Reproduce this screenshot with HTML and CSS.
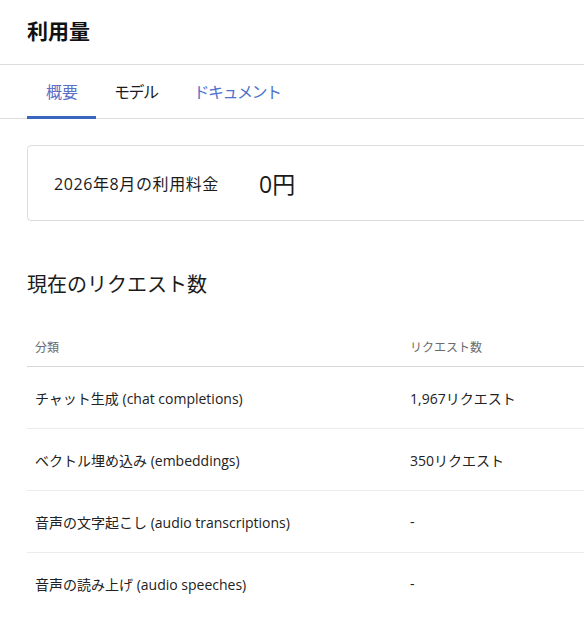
FILE: index.html
```html
<!DOCTYPE html>
<html lang="ja">
<head>
  <meta charset="UTF-8" />
  <title>利用量</title>
  <link rel="stylesheet" href="styles.css">
</head>
<body>

  <header class="page-header">
    <h1>利用量</h1>
  </header>

  <nav class="tabs">
    <a class="tab active">概要</a>
    <a class="tab kana">モデル</a>
    <a class="tab kana link">ドキュメント</a>
  </nav>

  <main class="content">
    <div class="bill-card">
      <span class="bill-label">2026年8月の利用料金</span>
      <span class="bill-amount">0円</span>
    </div>

    <h2 class="section-title">現在のリクエスト数</h2>

    <table class="usage">
      <thead>
        <tr>
          <th class="col-kind">分類</th>
          <th>リクエスト数</th>
        </tr>
      </thead>
      <tbody>
        <tr>
          <td>チャット生成 (chat completions)</td>
          <td>1,967リクエスト</td>
        </tr>
        <tr>
          <td>ベクトル埋め込み (embeddings)</td>
          <td>350リクエスト</td>
        </tr>
        <tr>
          <td>音声の文字起こし (audio transcriptions)</td>
          <td>-</td>
        </tr>
        <tr>
          <td>音声の読み上げ (audio speeches)</td>
          <td>-</td>
        </tr>
      </tbody>
    </table>
  </main>

</body>
</html>
```

FILE: styles.css
```css
body {
  margin: 0;
  background: #fff;
  color: #1b1b1b;
  font-family: 'Open Sans', 'Noto Sans CJK JP', sans-serif;
  overflow: hidden;
}
.page-header {
  height: 65px;
  box-sizing: border-box;
  padding: 0 27px 5px;
  display: flex;
  align-items: center;
  border-bottom: 1px solid #dcdcdc;
}
.page-header h1 {
  margin: 0;
  font-size: 21px;
  font-weight: bold;
  color: #111;
}
.tabs {
  display: flex;
  height: 53px;
  padding: 0 27px;
  border-bottom: 1px solid #dcdcdc;
}
.tab {
  display: flex;
  align-items: center;
  padding: 0 18px;
  font-size: 16px;
  color: #1b1b1b;
  border-bottom: 3px solid transparent;
  margin-bottom: -1px;
  cursor: pointer;
}
.tab.kana {
  letter-spacing: -1.5px;
}
.tab.active {
  padding: 0 18px 0 19px;
  color: #5a6fc6;
  border-bottom-color: #3b66bf;
}
.tab.link {
  color: #4f70cc;
}
.content {
  padding: 26px 0 0 27px;
}
.bill-card {
  width: 620px;
  height: 76px;
  box-sizing: border-box;
  border: 1px solid #dcdcdc;
  border-radius: 4px;
  display: flex;
  align-items: center;
  padding-left: 26px;
}
.bill-label {
  font-size: 16px;
  letter-spacing: 0.6px;
  width: 205px;
}
.bill-amount {
  font-size: 23px;
}
.section-title {
  margin: 48px 0 0;
  font-size: 20px;
  font-weight: normal;
  color: #1b1b1b;
}
.usage {
  margin-top: 29px;
  width: 620px;
  border-collapse: collapse;
}
.usage th {
  text-align: left;
  font-size: 12px;
  font-weight: normal;
  color: #6b6b6b;
  height: 39px;
  padding: 0 8px;
  border-bottom: 1px solid #d8d8d8;
}
.usage .col-kind {
  width: 359px;
}
.usage td {
  height: 61px;
  padding: 0 8px;
  font-size: 14px;
  color: #222;
  border-bottom: 1px solid #ececec;
}
.usage tr:last-child td {
  border-bottom: none;
}
```
